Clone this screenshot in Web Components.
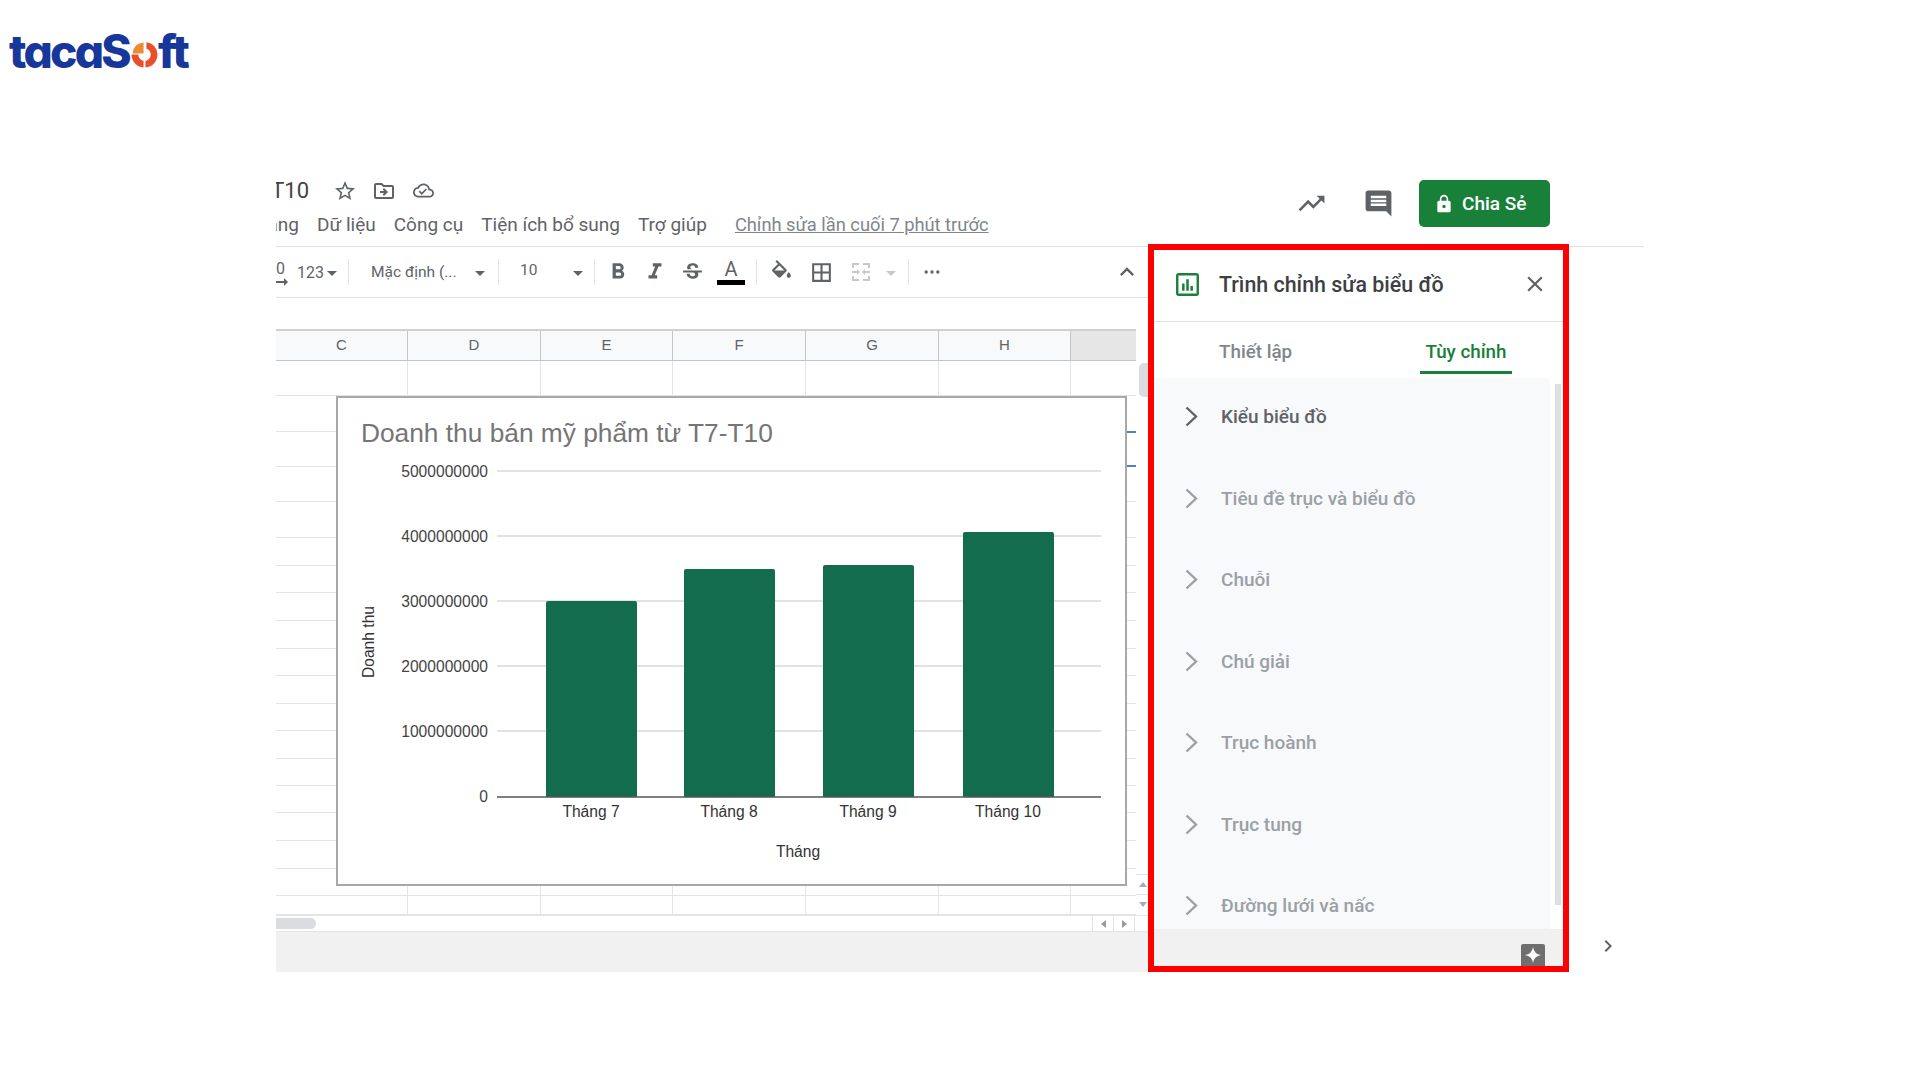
<!DOCTYPE html>
<html lang="vi">
<head>
<meta charset="utf-8">
<title>tacaSoft</title>
<style>
html,body{margin:0;background:#fff}
body{width:1920px;height:1080px;overflow:hidden;font-family:"Roboto","Noto Sans",sans-serif}
</style>
</head>
<body>
<app-logo></app-logo>
<sheet-window>
  <doc-header slot="header"></doc-header>
  <sheet-toolbar slot="toolbar"></sheet-toolbar>
  <sheet-grid slot="grid"><sales-chart></sales-chart></sheet-grid>
  <chart-editor slot="panel">
    <editor-row>Kiểu biểu đồ</editor-row>
    <editor-row muted>Tiêu đề trục và biểu đồ</editor-row>
    <editor-row muted>Chuỗi</editor-row>
    <editor-row muted>Chú giải</editor-row>
    <editor-row muted>Trục hoành</editor-row>
    <editor-row muted>Trục tung</editor-row>
    <editor-row muted>Đường lưới và nấc</editor-row>
  </chart-editor>
</sheet-window>
<script>
const P={
star:'<path d="M22 9.24l-7.19-.62L12 2 9.19 8.63 2 9.24l5.46 4.73L5.82 21 12 17.27 18.18 21l-1.63-7.03L22 9.24zM12 15.4l-3.76 2.27 1-4.28-3.32-2.88 4.38-.38L12 6.1l1.71 4.04 4.38.38-3.32 2.88 1 4.28L12 15.4z"/>',
move:'<path d="M20 6h-8l-2-2H4c-1.1 0-1.99.9-1.99 2L2 18c0 1.1.9 2 2 2h16c1.1 0 2-.9 2-2V8c0-1.1-.9-2-2-2zm0 12H4V6h5.17l2 2H20v10zm-8.01-9l-1.41 1.41L12.16 12H8v2h4.16l-1.59 1.59L11.99 17 16 13.01 11.99 9z"/>',
cloud:'<path d="M19.35 10.04C18.67 6.59 15.64 4 12 4 9.11 4 6.6 5.64 5.35 8.04 2.34 8.36 0 10.91 0 14c0 3.31 2.69 6 6 6h13c2.76 0 5-2.24 5-5 0-2.64-2.05-4.78-4.65-4.96zM19 18H6c-2.21 0-4-1.79-4-4 0-2.05 1.53-3.76 3.56-3.97l1.07-.11.5-.95C8.08 7.14 9.94 6 12 6c2.62 0 4.88 1.86 5.39 4.43l.3 1.5 1.53.11c1.56.1 2.78 1.41 2.78 2.96 0 1.65-1.35 3-3 3zm-9-3.82l-2.09-2.09L6.5 13.5 10 17l6.01-6.01-1.41-1.41z"/>',
trend:'<path d="M16 6l2.29 2.29-4.88 4.88-4-4L2 16.59 3.41 18l6-6 4 4 6.3-6.29L22 12V6z"/>',
comment:'<path d="M21.99 4c0-1.1-.89-2-1.99-2H4c-1.1 0-2 .9-2 2v12c0 1.1.9 2 2 2h14l4 4-.01-18zM18 14H6v-2h12v2zm0-3H6V9h12v2zm0-3H6V6h12v2z"/>',
lock:'<path d="M18 8h-1V6c0-2.76-2.24-5-5-5S7 3.24 7 6v2H6c-1.1 0-2 .9-2 2v10c0 1.1.9 2 2 2h12c1.1 0 2-.9 2-2V10c0-1.1-.9-2-2-2zm-6 9c-1.1 0-2-.9-2-2s.9-2 2-2 2 .9 2 2-.9 2-2 2zm3.1-9H8.9V6c0-1.71 1.39-3.1 3.1-3.1 1.71 0 3.1 1.39 3.1 3.1v2z"/>',
bold:'<path d="M15.6 10.79c.97-.67 1.65-1.77 1.65-2.79 0-2.26-1.75-4-4-4H7v14h7.04c2.09 0 3.71-1.7 3.71-3.79 0-1.52-.86-2.82-2.15-3.42zM10 6.5h3c.83 0 1.5.67 1.5 1.5s-.67 1.5-1.5 1.5h-3v-3zm3.5 9H10v-3h3.5c.83 0 1.5.67 1.5 1.5s-.67 1.5-1.5 1.5z"/>',
italic:'<path d="M10 4v3h2.21l-3.42 8H6v3h8v-3h-2.21l3.42-8H18V4z"/>',
strike:'<path d="M6.85 7.08C6.85 4.37 9.45 3 12.24 3c1.64 0 3 .49 3.9 1.28.77.65 1.46 1.73 1.46 3.24h-3.01c0-.31-.05-.59-.15-.85-.29-.86-1.2-1.28-2.25-1.28-1.86 0-2.34 1.02-2.34 1.7 0 .48.25.88.74 1.21.38.25.77.48 1.41.7H7.39c-.21-.34-.54-.89-.54-1.92zM21 12v-2H3v2h9.62c1.15.45 1.96.75 1.96 1.97 0 1-.81 1.67-2.28 1.67-1.54 0-2.93-.54-2.93-2.51H6.4c0 .55.08 1.13.24 1.58.81 2.29 3.29 3.3 5.67 3.3 2.27 0 5.3-.89 5.3-4.05 0-.3-.01-1.16-.48-1.96H21z"/>',
fill:'<path d="M16.56 8.94L7.62 0 6.21 1.41l2.38 2.38-5.15 5.15c-.59.59-.59 1.54 0 2.12l5.5 5.5c.29.29.68.44 1.06.44s.77-.15 1.06-.44l5.5-5.5c.59-.58.59-1.53 0-2.12zM5.21 10L10 5.21 14.79 10H5.21zM19 11.5s-2 2.17-2 3.5c0 1.1.9 2 2 2s2-.9 2-2c0-1.33-2-3.5-2-3.5z"/>',
borders:'<path d="M3 3v18h18V3H3zm8 16H5v-6h6v6zm0-8H5V5h6v6zm8 8h-6v-6h6v6zm0-8h-6V5h6v6z"/>',
merge:'<path d="M3 3h7v2H5v3H3zM14 3h7v5h-2V5h-5zM3 16h2v3h5v2H3zM19 16h2v5h-7v-2h5zM3 11h5V9l3 3-3 3v-2H3zM21 11h-5V9l-3 3 3 3v-2h5z"/>',
more:'<circle cx="5" cy="12" r="2"/><circle cx="12" cy="12" r="2"/><circle cx="19" cy="12" r="2"/>',
less:'<path d="M12 8l-6 6 1.41 1.41L12 10.83l4.59 4.58L18 14z"/>',
close:'<path d="M19 6.41L17.59 5 12 10.59 6.41 5 5 6.41 10.59 12 5 17.59 6.41 19 12 13.41 17.59 19 19 17.59 13.41 12z"/>',
next:'<path d="M10 6L8.59 7.41 13.17 12l-4.58 4.59L10 18l6-6z"/>',
chart:'<path fill-rule="evenodd" d="M3.5 1h17A2.5 2.5 0 0 1 23 3.5v17a2.5 2.5 0 0 1-2.5 2.5h-17A2.5 2.5 0 0 1 1 20.500v-17A2.500 2.500 0 0 1 3.500 1zM3.300 3.300v17.400h17.400V3.300z"/><path d="M6.800 11h2.400v7H6.800zM10.800 7h2.400v11h-2.400zM14.800 13.500h2.400V18h-2.400z"/>'
};
function icon(name,size,color){return `<svg width="${size}" height="${size}" viewBox="0 0 24 24" fill="${color||'currentColor'}" style="display:block;flex:none" aria-hidden="true">${P[name]}</svg>`}
function shadow(el,html){el.attachShadow({mode:'open'}).innerHTML=html}

customElements.define('app-logo',class extends HTMLElement{constructor(){super();shadow(this,`
<style>
:host{display:block;height:170px;box-sizing:border-box;padding:28px 0 0 9px}
.l{display:flex;align-items:baseline;height:46px;color:#17379b;font:800 46px/46px Inter,"Noto Sans",sans-serif;font-feature-settings:"cv11" 1;letter-spacing:-2.7px}
svg{display:block;flex:none;margin:0 0 0 2px}
</style>
<div class="l"><span>tacaS</span><svg width="27" height="27" viewBox="0 0 28 28">
<path d="M13 1.500V13H1.500A12 12 0 0 1 13 1.500z" fill="#ee8a32"/>
<path d="M16 1.200A13 13 0 0 1 27.500 14a13.500 13.500 0 0 1-27 0h7a6.500 6.500 0 0 0 13 0A6.500 6.500 0 0 0 16 8z" fill="#e9502a"/>
<path d="M13 19.500h2V28h-2z" fill="#fff"/>
</svg><span>ft</span></div>`)}});

customElements.define('sheet-window',class extends HTMLElement{constructor(){super();shadow(this,`
<style>
:host{display:block;width:1368px;margin-left:276px}
.below{display:flex;height:725px}
.main{width:872px;flex:none;display:flex;flex-direction:column}
.panel{width:421px;flex:none;margin-top:-3px;height:728px;position:relative;z-index:1}
.side{flex:1;display:flex;align-items:flex-end;padding:0 0 14px 27px}
.foot{height:40px;background:#f1f1f1;flex:none}
.hs{height:15px;flex:none;display:flex;align-items:center;background:#fff;border-top:1px solid #e3e3e3;border-bottom:1px solid #e6e6e6}
.thumb{width:40px;height:11px;background:#dadce0;border-radius:0 6px 6px 0}
.btn{width:20px;height:15px;border-left:1px solid #e3e3e3;display:flex;align-items:center;justify-content:center}
.first{margin-left:auto}
.end{width:13px;height:15px;border-left:1px solid #e3e3e3}
.tri{width:0;height:0;border:4px solid transparent}
.tl{border-right:5px solid #9a9a9a;border-left:0}.tr{border-left:5px solid #9a9a9a;border-right:0}
</style>
<slot name="header"></slot>
<div class="below">
 <div class="main">
  <slot name="toolbar"></slot>
  <slot name="grid"></slot>
  <div class="hs"><div class="thumb"></div><div class="btn first"><div class="tri tl"></div></div><div class="btn"><div class="tri tr"></div></div><div class="end"></div></div>
  <div class="foot"></div>
 </div>
 <div class="panel"><slot name="panel"></slot></div>
 <div class="side">${icon('next',24,'#5f6368')}</div>
</div>`)}});

customElements.define('doc-header',class extends HTMLElement{constructor(){super();shadow(this,`
<style>
:host{display:flex;height:77px;box-sizing:border-box;border-bottom:1px solid #e0e0e0;padding-right:94px;justify-content:space-between;color:#5f6368}
.left{display:flex;flex-direction:column}
.title{display:flex;align-items:center;height:41px;gap:15px}
.name{width:33px;overflow:hidden;font-size:22px;color:#444;direction:rtl;margin-right:9px;line-height:40px}
.title svg{margin-top:0}
.cloud{margin-left:2px}
.menu{display:flex;align-items:center;height:27px;font-size:19px;color:#5f6368;white-space:nowrap}
.clip{width:23px;overflow:hidden;direction:rtl;flex:none}
.menu span.i{flex:none}
a{color:#80868b;text-decoration:underline;font-size:18.300px}
.right{display:flex;align-items:center;align-self:flex-start;margin-top:10px;height:47px}
.btn{margin-left:25px;display:flex;align-items:center;width:131px;height:47px;box-sizing:border-box;padding-left:15px;gap:8px;background:#188038;color:#fff;border-radius:5px;font-size:19px;font-weight:500}
.t2{margin-left:36px}
</style>
<div class="left">
 <div class="title"><span class="name">T10</span>${icon('star',24)}${icon('move',24)}<span class="cloud">${icon('cloud',21)}</span></div>
 <div class="menu"><span class="clip"><bdi>ạng</bdi></span><span class="i" style="margin-left:18px">Dữ liệu</span><span class="i" style="margin-left:18px">Công cụ</span><span class="i" style="margin-left:18px">Tiện ích bổ sung</span><span class="i" style="margin-left:18px">Trợ giúp</span><a class="i" style="margin-left:28px">Chỉnh sửa lần cuối 7 phút trước</a></div>
</div>
<div class="right">${icon('trend',31)}<span class="t2">${icon('comment',31)}</span><div class="btn">${icon('lock',20)}<span>Chia Sẻ</span></div></div>`)}});

customElements.define('sheet-toolbar',class extends HTMLElement{constructor(){super();
const m=(x)=>`margin-left:${x}px`;
const caret=(x,c)=>`<i class="caret" style="${m(x)};${c?'border-top-color:'+c:''}"></i>`;
const sep=x=>`<i class="sep" style="${m(x)}"></i>`;
const ic=(n,s,x,c)=>`<span style="${m(x)}">${icon(n,s,c)}</span>`;
shadow(this,`
<style>
:host{display:flex;flex:none;align-items:center;height:51px;box-sizing:border-box;border-bottom:1px solid #e0e0e0;color:#5f6368;font-size:16px;white-space:nowrap;padding-right:7px}
span{display:block;flex:none}
.caret{display:block;flex:none;width:0;height:0;border:5px solid transparent;border-bottom:0;border-top:5px solid #5f6368;margin-top:2px}
.sep{display:block;flex:none;width:1px;height:26px;background:#e3e3e3}
.zero{width:12px;height:30px;overflow:hidden;line-height:24px;font-size:16px}
.a{width:28px;display:flex;flex-direction:column;align-items:center;font-size:20px;line-height:20px}
.a b{display:block;width:28px;height:5px;background:#000;margin-top:1px}
.a em{font-style:normal;font-weight:400}
</style>
<span class="zero">0<svg width="12" height="8" viewBox="0 0 12 8" style="display:block;margin-top:-3px"><path d="M0 3h8V0l4 4-4 4V5H0z" fill="#5f6368"/></svg></span>
<span style="${m(9)};width:27px">123</span>${caret(3)}${sep(11)}
<span style="${m(22)};width:103px;font-size:15.5px">Mặc định (...</span>${caret(1)}${sep(13)}
<span style="${m(21)};width:39px;font-size:15.5px;margin-top:-5px">10</span>${caret(14)}${sep(11)}
${ic('bold',26,10)}${ic('italic',26,10.5)}${ic('strike',25,12.5)}
<span class="a" style="${m(12)}"><em>A</em><b></b></span>${sep(11)}
${ic('fill',25,11.5)}${ic('borders',25,15.5)}${ic('merge',24,14.5,'#c8c8c8')}${caret(13,'#c8c8c8')}${sep(12)}
${ic('more',20,13)}
<span style="margin-left:auto">${icon('less',28,'#5f6368')}</span>`)}});

customElements.define('sheet-grid',class extends HTMLElement{constructor(){super();
const H=[35,36,35,35,36,28,27,28,28,27,28,27,28,27,27,28,28,27,19];
const W=[132,133,132,133,133,132,65];
const cols=W.map(w=>w+'px').join(' ');
const heads=['C','D','E','F','G','H',''];
let cells='';H.forEach(()=>W.forEach(()=>cells+='<div class="c"></div>'));
shadow(this,`
<style>
:host{display:block;flex:none;height:617px}
.bar{height:31px}
.head{display:grid;grid-template-columns:${cols};width:860px;height:32px;box-sizing:border-box;border-top:2px solid #d0d0d0;border-bottom:1px solid #c6c6c6;background:#f8f9fa;font:15px/27px "Liberation Sans",Arial,sans-serif;color:#5f6368;text-align:center}
.head div{border-right:1px solid #c6c6c6}
.head div:last-child{background:#e6e6e6;border:0}
.body{display:flex;height:554px;position:relative}
.grid{display:grid;grid-template-columns:${cols};grid-template-rows:${H.map(h=>h+'px').join(' ')};width:860px}
.c{border-right:1px solid #e4e4e4;border-bottom:1px solid #e4e4e4}
.c:nth-child(7n){border-right:0}
.vs{width:12px;display:flex;flex-direction:column;align-items:flex-end}
.th{width:9px;height:34px;background:#dadce0;border-radius:5px 0 0 5px;margin-top:2px}
.vb{width:12px;height:20px;box-sizing:border-box;border-top:1px solid #e3e3e3;display:flex;align-items:center;padding-left:3px}
.up{width:0;height:0;border:4px solid transparent;border-top:0;border-bottom:5px solid #aaa}
.dn{width:0;height:0;border:4px solid transparent;border-bottom:0;border-top:5px solid #aaa}
.tick{position:absolute;left:851px;width:9px;height:2px;background:#4d7fd3}
</style>
<div class="bar"></div>
<div class="head">${heads.map(h=>`<div>${h}</div>`).join('')}</div>
<div class="body"><div class="grid">${cells}</div>
<div class="vs"><div class="th"></div><div class="vb" style="margin-top:auto"><i class="up"></i></div><div class="vb" style="margin-bottom:1px"><i class="dn"></i></div></div>
<i class="tick" style="top:70px"></i><i class="tick" style="top:104px"></i>
<slot></slot></div>`)}});

customElements.define('sales-chart',class extends HTMLElement{constructor(){super();
const Y=[[471,'5000000000'],[536,'4000000000'],[601,'3000000000'],[666,'2000000000'],[731,'1000000000'],[797,'0']];
const B=[[546,601,'Tháng 7'],[684,569,'Tháng 8'],[823,565,'Tháng 9'],[963,532,'Tháng 10']];
shadow(this,`
<style>
:host{display:block;position:absolute;left:60px;top:35px;width:791px;height:490px}
svg{display:block;width:791px;height:490px;font-family:"Liberation Sans",Arial,sans-serif}
</style>
<svg viewBox="336 396 791 490">
<rect x="337" y="397" width="789" height="488" fill="#fff" stroke="#a8a8a8" stroke-width="2"/>
<text x="361" y="442" font-size="26.300" fill="#757575">Doanh thu bán mỹ phẩm từ T7-T10</text>
${Y.map(([y,t],i)=>`${i<5?`<line x1="497" x2="1101" y1="${y}" y2="${y}" stroke="#d9d9d9" stroke-width="1.500"/>`:''}<text x="488" y="${i==5?y+4.5:y+5.5}" text-anchor="end" font-size="15.600" fill="#444">${t}</text>`).join('')}
${B.map(([x,y,t])=>`<path d="M${x} 797V${y+2}q0-2 2-2h${87}q2 0 2 2V797z" fill="#146c4f"/><text x="${x+45}" y="816.500" text-anchor="middle" font-size="15.600" fill="#333">${t}</text>`).join('')}
<line x1="497" x2="1101" y1="797" y2="797" stroke="#555" stroke-width="1.500"/>
<text x="798" y="856.500" text-anchor="middle" font-size="15.600" fill="#333">Tháng</text>
<text transform="translate(373.500 642) rotate(-90)" text-anchor="middle" font-size="15.600" fill="#333">Doanh thu</text>
</svg>`)}});

customElements.define('chart-editor',class extends HTMLElement{constructor(){super();shadow(this,`
<style>
:host{display:flex;flex-direction:column;height:728px;box-sizing:border-box;border:6px solid #fe0000;background:#fff;overflow:hidden;color:#5f6368}
.head{height:72px;flex:none;box-sizing:border-box;border-bottom:1px solid #dfe1e3;display:flex;align-items:center;padding:0 15px 3px 21px}
.title{margin-left:19px;font-size:21.400px;font-weight:500;color:#3c4043;flex:1}
.tabs{height:56px;flex:none;display:flex;font-size:18.800px;font-weight:500;color:#80868b}
.t1{margin:20px 0 0 65px;width:201px;line-height:20px}
.t2{width:92px;height:52px;box-sizing:border-box;padding-top:20px;text-align:center;color:#188038;border-bottom:3px solid #188038;line-height:20px}
.main{flex:1;display:flex;min-height:0}
.list{width:396px;flex:none;background:#f8f9fa;overflow:hidden}
.list ::slotted(editor-row:first-child){margin-top:-2px}
.gut{flex:1;display:flex;padding:6px 2px 24px 5px;box-sizing:border-box}
.th{flex:1;background:#dedfe0}
.foot{height:37px;flex:none;background:#f1f1f1;display:flex;justify-content:flex-end;align-items:flex-end;padding-right:18px;border-top:1px solid #eee;box-sizing:border-box}
.ex{width:24px;height:22px;background:#6f6f6f;border-radius:2px 2px 0 0;display:flex;align-items:center;justify-content:center}
</style>
<div class="head"><svg width="25" height="25" viewBox="0 0 24 24" fill="#188038" style="flex:none">${P.chart}</svg><div class="title">Trình chỉnh sửa biểu đồ</div>${icon('close',26,'#5f6368')}</div>
<div class="tabs"><div class="t1">Thiết lập</div><div class="t2">Tùy chỉnh</div></div>
<div class="main"><div class="list"><slot></slot></div><div class="gut"><div class="th"></div></div></div>
<div class="foot"><div class="ex"><svg width="16" height="16" viewBox="0 0 16 16"><path d="M8 0q1 7 8 8-7 1-8 8-1-7-8-8 7-1 8-8z" fill="#fff"/></svg></div></div>`)}});

customElements.define('editor-row',class extends HTMLElement{constructor(){super();shadow(this,`
<style>
:host{display:flex;align-items:center;height:81.500px;padding-left:31px;font-size:19px;font-weight:500;color:#5f6368;white-space:nowrap}
:host([muted]){color:#9aa0a6}
svg{display:block;flex:none;margin-right:23px}
</style>
<svg width="13" height="21" viewBox="0 0 13 21"><path d="M1.500 1.500l9.500 9-9.500 9" fill="none" stroke="currentColor" stroke-width="2.400"/></svg><slot></slot>`)}});
</script>
</body>
</html>
